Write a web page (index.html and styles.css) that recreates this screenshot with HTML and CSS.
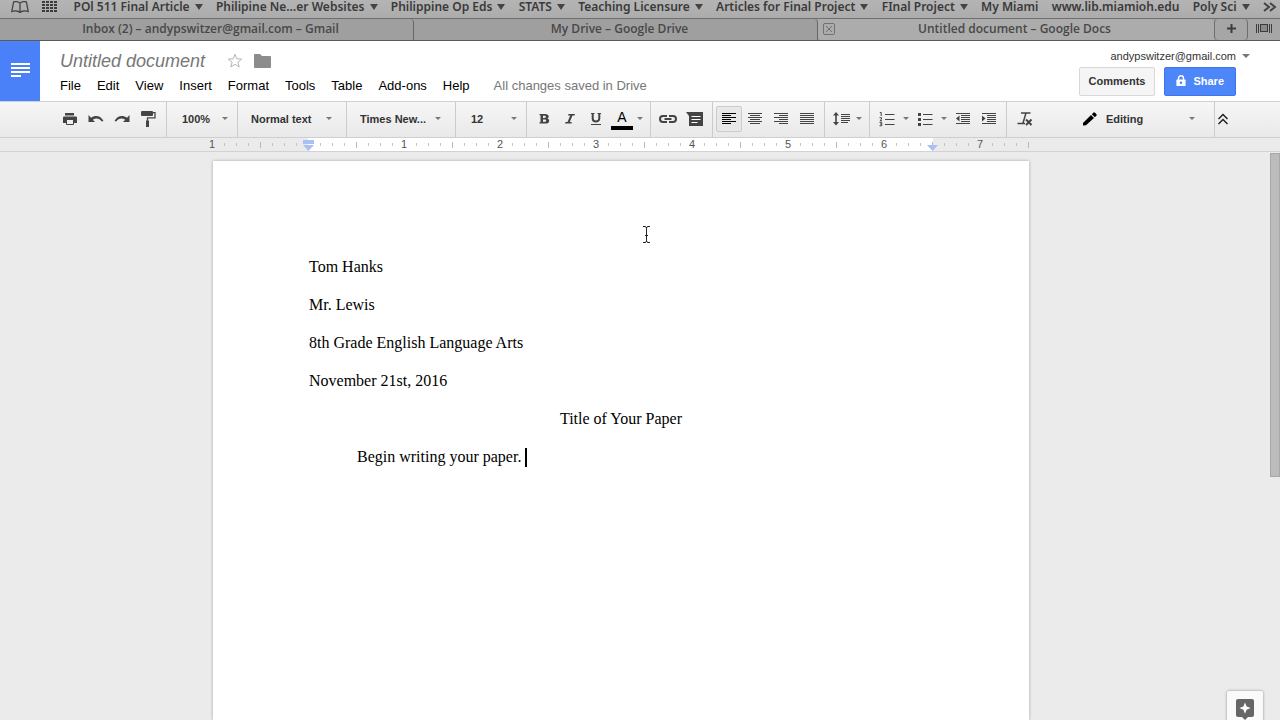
FILE: index.html
```html
<!DOCTYPE html>
<html lang="en">
<head>
<meta charset="utf-8">
<title>Untitled document - Google Docs</title>
<link rel="stylesheet" href="styles.css">
</head>
<body>
<nav class="bookmarks" aria-label="Bookmarks">
  <button class="plain" aria-label="Reading list"><svg width="18" height="12" viewBox="0 0 18 12" fill="none" stroke="#444" stroke-width="1.3"><path d="M9 2.2C7.500.4 3.800.2 2.600 1L.8 10.500C3 9.700 7 9.600 9 11.500C11 9.600 15 9.700 17.200 10.500L15.400 1C14.200.2 10.500.4 9 2.200zM9 2.200V11.500"/></svg></button>
  <button class="plain grid-icon" aria-label="Top sites"><svg width="16" height="12" viewBox="0 0 16 12" fill="#3c3c3c"><path d="M0 0h3v2H0zM4 0h3v2H4zM8 0h3v2H8zM12 0h3v2h-3zM0 3h3v2H0zM4 3h3v2H4zM8 3h3v2H8zM12 3h3v2h-3zM0 6h3v2H0zM4 6h3v2H4zM8 6h3v2H8zM12 6h3v2h-3zM0 9h3v2H0zM4 9h3v2H4zM8 9h3v2H8zM12 9h3v2h-3z"/></svg></button>
  <button class="plain folder">POl 511 Final Article</button>
  <button class="plain folder">Philipine Ne…er Websites</button>
  <button class="plain folder">Philippine Op Eds</button>
  <button class="plain folder">STATS</button>
  <button class="plain folder">Teaching Licensure</button>
  <button class="plain folder">Articles for Final Project</button>
  <button class="plain folder">FInal Project</button>
  <a href="#">My Miami</a>
  <a href="#">www.lib.miamioh.edu</a>
  <button class="plain folder">Poly Sci</button>
  <button class="plain" aria-label="More bookmarks"><svg width="14" height="12" viewBox="0 0 14 12" fill="none" stroke="#444" stroke-width="2"><path d="M1 2l5 4-5 4M7 2l5 4-5 4"/></svg></button>
</nav>
<div class="tabs">
  <a class="tab" href="#">Inbox (2) – andypswitzer@gmail.com – Gmail</a>
  <a class="tab" href="#">My Drive – Google Drive</a>
  <div class="tab active">
    <button class="plain close" aria-label="Close tab"><svg width="12" height="12" viewBox="0 0 12 12" fill="none" stroke="#717171"><rect x=".5" y=".5" width="11" height="11" rx="1.500"/><path d="M3 3l6 6M9 3l-6 6"/></svg></button>
    <span class="tab-name">Untitled document – Google Docs</span>
  </div>
  <button class="plain tab-tool new" aria-label="New tab"><svg width="9" height="9" viewBox="0 0 9 9" fill="#3c3c3c"><path d="M3.500 0h2v3.500H9v2H5.500V9h-2V5.500H0v-2h3.500z"/></svg></button>
  <button class="plain tab-tool" aria-label="Show all tabs"><svg width="16" height="9" viewBox="0 0 16 9" fill="none" stroke="#3c3c3c"><path d="M.5 0v9M2.500 0v9M13.500 0v9M15.500 0v9"/><rect x="4.500" y=".5" width="7" height="7" fill="#8a8a8a"/></svg></button>
</div>

<header class="header">
  <a class="logo" href="#" aria-label="Docs home"><svg width="20" height="16" viewBox="0 0 20 16" fill="#fff"><path d="M0 1h19v2H0zM0 5h19v2H0zM0 9h19v2H0zM0 13h10v2H0z"/></svg></a>
  <div class="doc-info">
    <div class="title-row">
      <input class="title" type="text" value="Untitled document" aria-label="Document title">
      <button class="plain" aria-label="Star"><svg width="16" height="16" viewBox="0 0 16 16" fill="none" stroke="#b5b5b5"><path d="M8 1.300l1.800 4.500 4.900.3-3.800 3.100 1.300 4.800L8 11.300 3.800 14l1.300-4.800L1.300 6.100l4.900-.3z"/></svg></button>
      <button class="plain" aria-label="Move to folder"><svg width="17" height="14" viewBox="0 0 17 14" fill="#8c8c8c"><path d="M1 0h5l2 2h8q1 0 1 1v10q0 1-1 1H1q-1 0-1-1V1q0-1 1-1z"/></svg></button>
    </div>
    <div class="menu-row">
      <button class="plain">File</button>
      <button class="plain">Edit</button>
      <button class="plain">View</button>
      <button class="plain">Insert</button>
      <button class="plain">Format</button>
      <button class="plain">Tools</button>
      <button class="plain">Table</button>
      <button class="plain">Add-ons</button>
      <button class="plain">Help</button>
      <span class="status">All changes saved in Drive</span>
    </div>
  </div>
  <div class="account">
    <button class="plain email">andypswitzer@gmail.com</button>
    <div class="actions">
      <button class="btn">Comments</button>
      <button class="btn share"><svg width="10" height="12" viewBox="0 0 10 12"><path d="M2.500 5V3.300a2.500 2.500 0 0 1 5 0V5" fill="none" stroke="#fff" stroke-width="1.400"/><path fill="#fff" fill-rule="evenodd" d="M1 4.500h8q.6 0 .6.600v5.300q0 .6-.6.600H1q-.6 0-.6-.6V5.100q0-.6.600-.6zM5 6.500a1.300 1.300 0 1 0 0 2.600 1.300 1.300 0 0 0 0-2.600z"/></svg>Share</button>
    </div>
  </div>
</header>

<div class="toolbar" role="toolbar" aria-label="Formatting">
  <div class="group first">
    <button class="tool" aria-label="Print"><svg width="16" height="16" viewBox="0 0 16 16"><path fill="#444" d="M3 2h9v2.500H3zM2 5.500h12q1 0 1 1V12h-3V9H4v3H1V6.500q0-1 1-1z"/><path fill="none" stroke="#444" d="M4.500 9v4.500h7V9"/></svg></button>
    <button class="tool" aria-label="Undo"><svg width="16" height="16" viewBox="0 0 16 16" fill="#444"><path d="M.5 4v7h6.500L4.800 8.700C8 6.600 11.500 7.200 13.800 10.500L15.500 10C13.300 4.800 7.500 3.400 3 6.700z"/></svg></button>
    <button class="tool" aria-label="Redo"><svg width="16" height="16" viewBox="0 0 16 16" fill="#444"><path d="M15.500 4v7H9l2.200-2.300C8 6.600 4.500 7.200 2.200 10.500L.5 10C2.700 4.800 8.500 3.400 13 6.700z"/></svg></button>
    <button class="tool" aria-label="Paint format"><svg width="16" height="16" viewBox="0 0 16 16"><path fill="#444" d="M2 0h10q1 0 1 1v3q0 1-1 1H2Q1 5 1 4V1q0-1 1-1zM6 9.500h3V16H6z"/><path fill="none" stroke="#444" stroke-width="1.300" d="M12 1.600h3v5.200H7.500v3"/></svg></button>
  </div>
  <div class="group"><select class="pick zoom" aria-label="Zoom"><option>100%</option></select></div>
  <div class="group"><select class="pick style" aria-label="Styles"><option>Normal text</option></select></div>
  <div class="group"><select class="pick style" aria-label="Font"><option>Times New...</option></select></div>
  <div class="group"><select class="pick size" aria-label="Font size"><option>12</option></select></div>
  <div class="group text">
    <button class="tool" aria-label="Bold"><svg width="16" height="16" viewBox="0 0 16 16"><path fill="#444" fill-rule="evenodd" d="M3.500 3h5.500c2.500 0 3.700 1.100 3.700 2.500 0 1-.6 1.700-1.500 2.100 1.200.3 2 1.100 2 2.300 0 1.700-1.400 2.600-3.800 2.600H3.500v-1.300h1V4.300h-1zM7 4.700v2.200h1.400c2 0 2-2.200 0-2.200zM7 8.400v2.400h1.600c2.100 0 2.100-2.400 0-2.400z"/></svg></button>
    <button class="tool" aria-label="Italic"><svg width="16" height="16" viewBox="0 0 16 16" fill="#444"><path d="M6.500 3h6.500l-.5 1.500h-2L7.800 11h2l-.4 1.500H3L3.500 11h2L8.200 4.500H6z"/></svg></button>
    <button class="tool" aria-label="Underline"><svg width="16" height="16" viewBox="0 0 16 16"><path d="M4.700 2.500V7.500c0 4 6.600 4 6.600 0V2.500" fill="none" stroke="#444" stroke-width="2"/><path stroke="#444" d="M3 13.500h10M3 2.500h3.500M9.500 2.500H13"/></svg></button>
    <button class="tool color" aria-label="Text color">A</button>
    <button class="drop" aria-label="Text color options"></button>
  </div>
  <div class="group link">
    <button class="tool" aria-label="Insert link"><svg width="20" height="16" viewBox="0 0 20 16" fill="none" stroke="#444" stroke-width="2"><path d="M9 5H5a2.800 2.800 0 0 0 0 6h4M11 5h4a2.800 2.800 0 0 1 0 6h-4M6.500 8h7"/></svg></button>
    <button class="tool" aria-label="Insert comment"><svg width="18" height="16" viewBox="0 0 18 16"><path fill="#444" d="M1 1h17v14H4V5z"/><path stroke="#fff" d="M6.500 5.500h9M6.500 8.500h9M6.500 11.500h6"/></svg></button>
  </div>
  <div class="group align">
    <button class="tool pressed" aria-label="Left align"><svg width="16" height="16" viewBox="0 0 16 16" stroke="#000"><path d="M1 2.500h14M1 4.500h9M1 6.500h14M1 8.500h9M1 10.500h14M1 12.500h9"/></svg></button>
    <button class="tool" aria-label="Center align"><svg width="16" height="16" viewBox="0 0 16 16" stroke="#444"><path d="M1 2.500h14M3 4.500h10M1 6.500h14M3 8.500h10M1 10.500h14M3 12.500h10"/></svg></button>
    <button class="tool" aria-label="Right align"><svg width="16" height="16" viewBox="0 0 16 16" stroke="#444"><path d="M1 2.500h14M6 4.500h9M1 6.500h14M6 8.500h9M1 10.500h14M6 12.500h9"/></svg></button>
    <button class="tool" aria-label="Justify"><svg width="16" height="16" viewBox="0 0 16 16" stroke="#444"><path d="M1 2.500h14M1 4.500h14M1 6.500h14M1 8.500h14M1 10.500h14M1 12.500h14"/></svg></button>
  </div>
  <div class="group spacing">
    <button class="tool" aria-label="Line spacing"><svg width="18" height="16" viewBox="0 0 18 16"><path stroke="#444" stroke-width="1.600" d="M4 3v10"/><path fill="#444" d="M4 1L7 4.500H1zM4 14.500L1 11h6z"/><path stroke="#444" d="M9 3.500h9M9 5.500h9M9 7.500h9M9 9.500h9M9 11.500h7"/></svg></button>
    <button class="drop" aria-label="Line spacing options"></button>
  </div>
  <div class="group lists">
    <button class="tool" aria-label="Numbered list"><svg width="16" height="16" viewBox="0 0 16 16" fill="none" stroke="#444"><path d="M6 3.500h9.500M6 8.500h9.500M6 13.500h9.500"/><path d="M.8 1.500h1.400V5M.5 6.700h2v1.500L1 9.500v.2h2M.5 11.300h2.200v3.500H.5M1 13h1.700"/></svg></button>
    <button class="drop" aria-label="Numbered list options"></button>
    <button class="tool" aria-label="Bulleted list"><svg width="16" height="16" viewBox="0 0 16 16"><path stroke="#444" d="M6 3.500h9.500M6 8.500h9.500M6 13.500h9.500"/><path fill="#444" d="M1 2h3v3H1zM1 7h3v3H1zM1 12h3v3H1z"/></svg></button>
    <button class="drop" aria-label="Bulleted list options"></button>
    <button class="tool" aria-label="Decrease indent"><svg width="16" height="16" viewBox="0 0 16 16"><path stroke="#444" d="M1 2.500h14M6 4.500h9M6 6.500h9M6 8.500h9M6 10.500h9M1 12.500h14"/><path fill="#444" d="M4.500 4.500v6L1 7.500z"/></svg></button>
    <button class="tool" aria-label="Increase indent"><svg width="16" height="16" viewBox="0 0 16 16"><path stroke="#444" d="M1 2.500h14M6 4.500h9M6 6.500h9M6 8.500h9M6 10.500h9M1 12.500h14"/><path fill="#444" d="M1 4.500v6l3.500-3z"/></svg></button>
  </div>
  <div class="group last">
    <button class="tool" aria-label="Clear formatting"><svg width="18" height="16" viewBox="0 0 18 16" fill="none" stroke="#444"><path stroke-width="1.500" d="M5 2h9.500M10 2L7 12M1.500 12.500H9"/><path stroke-width="2" d="M10 8.500l5.500 5.500M15.500 8.500L10 14"/></svg></button>
    <div class="mode">
      <svg width="14" height="14" viewBox="0 0 14 14" fill="#000"><path d="M0 11L8 3l3 3-8 7.300-3 .2zM8.800 2.200L10.300.7q.9-.8 1.700 0l1.300 1.300q.8.900 0 1.700L11.800 5.200z"/></svg>
      <select class="pick" aria-label="Mode"><option>Editing</option></select>
    </div>
  </div>
  <button class="tool collapse" aria-label="Hide menus"><svg width="12" height="14" viewBox="0 0 12 14" fill="none" stroke="#222" stroke-width="1.500"><path d="M1.500 7L6 2.500 10.500 7M1.500 12L6 7.500l4.500 4.500"/></svg></button>
</div>

<div class="ruler">
  <svg class="ruler-scale" width="818" height="13" aria-label="Ruler">
    <defs>
      <pattern id="inch" width="96" height="13" patternUnits="userSpaceOnUse">
        <path stroke="#c4c4c4" d="M12.500 5v3M24.500 5v3M36.500 5v3M60.500 5v3M72.500 5v3M84.500 5v3"/>
        <path stroke="#b8b8b8" d="M48.500 4v6"/>
      </pattern>
    </defs>
    <rect x="96" width="625" height="13" fill="#fff"/>
    <rect width="816" height="13" fill="url(#inch)"/>
    <path stroke="#b8b8b8" d="M816.500 4v6"/>
    <g class="ruler-numbers">
      <text x="0" y="10">1</text>
      <text x="192" y="10">1</text>
      <text x="288" y="10">2</text>
      <text x="384" y="10">3</text>
      <text x="480" y="10">4</text>
      <text x="576" y="10">5</text>
      <text x="672" y="10">6</text>
      <text x="768" y="10">7</text>
    </g>
    <path fill="#a8c0f5" d="M91 2h11v4H91zM91 7h11l-5.500 6zM715 7h11l-5.500 6z"/>
  </svg>
</div>

<main class="workspace">
  <div class="canvas">
    <article class="page">
      <p>Tom Hanks</p>
      <p>Mr. Lewis</p>
      <p>8th Grade English Language Arts</p>
      <p>November 21st, 2016</p>
      <p class="center">Title of Your Paper</p>
      <p class="indent">Begin writing your paper. <span class="caret"></span></p>
      <svg class="pointer" width="9" height="17" viewBox="0 0 9 17" fill="none" stroke="#222"><path d="M1 .5h2q1.500 0 1.500 2v12q0 2-1.500 2H1M8 .5H6q-1.500 0-1.500 2v12q0 2 1.500 2h2M3 9.500h3"/></svg>
    </article>
  </div>
  <div class="rail"><div class="thumb"></div></div>
  <button class="explore" aria-label="Explore"><svg width="18" height="21" viewBox="0 0 18 21"><path fill="#666" d="M2 0h14q2 0 2 2v14q0 2-2 2h-4l-3 3-3-3H2q-2 0-2-2V2q0-2 2-2z"/><path fill="#fff" d="M9 3.500l1.600 4 4 1.600-4 1.600-1.600 4-1.600-4-4-1.600 4-1.600z"/></svg></button>
</main>
</body>
</html>
```
FILE: styles.css
```css
* { box-sizing: border-box; }

body {
  margin: 0;
  height: 100vh;
  display: flex;
  flex-direction: column;
  overflow: hidden;
  background: #ebebeb;
  font-family: "Liberation Sans", Arial, sans-serif;
  font-size: 13px;
  color: #000;
}

button, select, input { font: inherit; color: inherit; }

a { color: inherit; text-decoration: none; }

svg { display: block; flex: none; }

.plain {
  display: flex;
  align-items: center;
  padding: 0;
  border: 0;
  background: none;
  white-space: nowrap;
}

/* Browser chrome */
.bookmarks {
  display: flex;
  align-items: center;
  justify-content: space-between;
  height: 18px;
  padding: 0 3px 4px 11px;
  background: linear-gradient(#b4b4b4, #acacac);
  font-family: "Noto Sans", sans-serif;
  font-size: 12px;
  font-weight: 600;
  line-height: 14px;
  color: #3a3a3a;
  white-space: nowrap;
}

.grid-icon { padding-right: 2px; }

.folder::after {
  content: "";
  margin-left: 5px;
  border: 4px solid transparent;
  border-top: 6px solid #444;
  border-bottom: 0;
}

.tabs {
  display: grid;
  grid-template-columns: 414fr 404fr 396fr 34px 32px;
  height: 23px;
  border-top: 1px solid #6e6e6e;
  border-bottom: 1px solid #5a5a5a;
  background: #9f9f9f;
  font-family: "Open Sans", sans-serif;
  font-size: 12px;
  font-weight: 600;
  line-height: 19px;
  color: #484848;
}

.tab {
  display: flex;
  align-items: center;
  justify-content: center;
  border-right: 1px solid #666;
  border-radius: 0 4px 0 4px;
  padding: 0 0 2px 8px;
}

.tab.active { background: #acacac; border-right: 0; padding: 0 20px 2px 5px; }

.tab-name { flex: 1; text-align: center; }

.tab-tool { justify-content: center; padding-bottom: 2px; background: #a6a6a6; }

.tab-tool.new {
  border: 1px solid #6e6e6e;
  border-width: 0 1px;
  border-radius: 4px;
}

/* Document header */
.header {
  display: flex;
  height: 60px;
  background: #fff;
}

.logo {
  display: flex;
  align-items: center;
  width: 40px;
  padding: 0 0 2px 11px;
  background: #4a80f8;
}

.doc-info { flex: 1; padding: 8px 0 0 20px; }

.title-row {
  display: flex;
  align-items: center;
  gap: 11px;
  height: 24px;
}

.title {
  width: 156px;
  padding: 0;
  border: 0;
  background: none;
  font-size: 18px;
  font-style: italic;
  color: #777;
}

.menu-row {
  display: flex;
  align-items: center;
  gap: 16px;
  height: 24px;
  white-space: nowrap;
}

.status { padding-left: 8px; color: #777; }

.account {
  display: flex;
  flex-direction: column;
  align-items: flex-end;
  gap: 4px;
  padding: 7px 30px 0 0;
}

.email { height: 15px; font-size: 11px; color: #333; }

.email::after, .drop::after {
  content: "";
  border: 4px solid transparent;
  border-top-color: #777;
  border-bottom: 0;
}

.email::after { margin-left: 6px; }

.actions { display: flex; gap: 9px; padding-right: 14px; }

.btn {
  display: flex;
  align-items: center;
  justify-content: center;
  gap: 7px;
  height: 29px;
  padding: 0 8px 2px;
  border: 1px solid #d8d8d8;
  border-radius: 2px;
  background: #f5f5f5;
  font-size: 11px;
  font-weight: bold;
  color: #333;
}

.btn:first-child { padding: 0 9px 2px; }

.btn.share {
  padding: 0 11px 2px;
  border-color: #3f74ea;
  background: #4d86f9;
  color: #fff;
}

/* Toolbar */
.toolbar {
  display: flex;
  align-items: stretch;
  height: 37px;
  border-top: 1px solid #d0d0d0;
  border-bottom: 1px solid #cfcfcf;
  background: linear-gradient(#f6f6f6, #e9e9e9);
}

.group {
  display: flex;
  align-items: center;
  padding-bottom: 2px;
  border-right: 1px solid #cbcbcb;
}

.group.first { padding: 0 5px 2px 57px; }
.group.text { padding: 0 6px 2px 4px; }
.group.link { padding: 0 5px 2px 4px; }
.group.align { padding: 0 4px 2px 3px; }
.group.spacing { padding: 0 6px 2px 3px; }
.group.lists { padding: 0 4px 2px 4px; }
.group.last { flex: 1; padding: 0 0 2px 5px; justify-content: space-between; }

.tool {
  display: flex;
  align-items: center;
  justify-content: center;
  width: 26px;
  height: 26px;
  padding: 0;
  border: 0;
  background: none;
}

.tool.pressed {
  border: 1px solid #ccc;
  border-radius: 2px;
  background: #e8e8e8;
}

.tool.color {
  width: 22px;
  height: 22px;
  margin: 0 2px;
  border-bottom: 4px solid #000;
  font-size: 14px;
}

.drop {
  display: flex;
  align-items: center;
  justify-content: center;
  width: 9px;
  height: 26px;
  padding: 0;
  border: 0;
  background: none;
}

.drop::after { border-width: 3px; border-bottom: 0; }

.lists .drop { width: 12px; }

.pick {
  height: 26px;
  padding: 0;
  border: 0;
  appearance: none;
  background: url("data:image/svg+xml,%3Csvg xmlns='http://www.w3.org/2000/svg' width='6' height='3'%3E%3Cpath fill='%23777' d='M0 0h6L3 3z'/%3E%3C/svg%3E") no-repeat right 9px center;
  font-size: 11px;
  font-weight: bold;
  color: #333;
}

.zoom, .size { width: 70px; padding-left: 15px; }
.style { width: 108px; padding-left: 13px; background-position: right 14px center; }

.mode { display: flex; align-items: center; width: 131px; }

.mode .pick { flex: 1; padding-left: 9px; background-position: right 19px center; }

.collapse { width: 65px; height: auto; padding: 0 50px 2px 0; }

/* Ruler */
.ruler {
  display: flex;
  justify-content: center;
  height: 14px;
  padding-right: 38px;
  border-bottom: 1px solid #d2d2d2;
}

.ruler-scale { overflow: visible; }

.ruler-numbers { font-size: 11px; text-anchor: middle; fill: #555; }

/* Page area */
.workspace {
  position: relative;
  display: flex;
  flex: 1;
  min-height: 0;
}

.canvas {
  display: flex;
  flex: 1;
  justify-content: center;
  padding: 9px 28px 0 0;
}

.page {
  position: relative;
  width: 816px;
  padding: 87px 96px 0;
  background: #fff;
  box-shadow: 0 0 3px rgba(0, 0, 0, 0.3);
  font-family: "Liberation Serif", "Times New Roman", serif;
  font-size: 16px;
  line-height: 38px;
}

.page p { margin: 0; }

.center { text-align: center; }

.page .indent { display: flex; align-items: center; padding-left: 48px; white-space: pre; }

.caret { width: 2px; height: 19px; background: #000; }

.pointer { position: absolute; left: 429px; top: 65px; }

.rail { width: 10px; padding-top: 1px; }

.thumb { height: 324px; border: 1px solid #a8a8a8; background: #bcbcbc; }

.explore {
  position: absolute;
  right: 17px;
  bottom: -7px;
  display: flex;
  justify-content: center;
  width: 36px;
  height: 36px;
  padding: 8px 0 0;
  border: 0;
  border-radius: 2px;
  background: #fafafa;
  box-shadow: 0 0 3px rgba(0, 0, 0, 0.4);
}
```
